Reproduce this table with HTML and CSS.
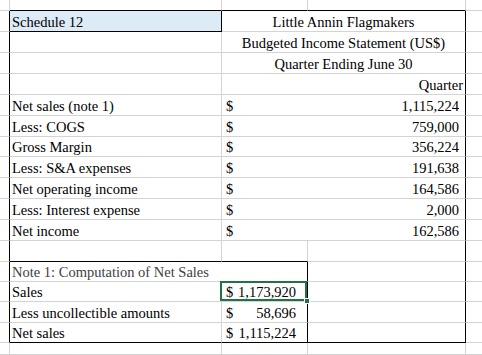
FILE: index.html
```html
<!DOCTYPE html>
<html lang="en">
<head>
    <meta charset="UTF-8">
    <title>Schedule 12</title>
    <link rel="stylesheet" href="styles.css">
</head>
<body>
<div class="sheet">
    <!-- row above the table -->
    <div class="c"></div><div class="c bb"></div><div class="c bb"></div><div class="c bb"></div><div class="c d"></div>

    <!-- heading -->
    <div class="c edge"></div>
    <div class="c sched br bb">Schedule 12</div>
    <div class="c wide center br">Little Annin Flagmakers</div>
    <div class="c d"></div>

    <div class="c edge"></div><div class="c"></div>
    <div class="c wide center br">Budgeted Income Statement (US$)</div>
    <div class="c d"></div>

    <div class="c edge"></div><div class="c"></div>
    <div class="c wide center br">Quarter Ending June 30</div>
    <div class="c d"></div>

    <div class="c edge"></div><div class="c"></div>
    <div class="c wide right br">Quarter</div>
    <div class="c d"></div>

    <!-- statement lines -->
    <div class="c edge"></div><div class="c">Net sales (note 1)</div>
    <div class="c wide money br"><span>$</span><span>1,115,224</span></div>
    <div class="c d"></div>

    <div class="c edge"></div><div class="c">Less: COGS</div>
    <div class="c wide money br"><span>$</span><span>759,000</span></div>
    <div class="c d"></div>

    <div class="c edge"></div><div class="c">Gross Margin</div>
    <div class="c wide money br"><span>$</span><span>356,224</span></div>
    <div class="c d"></div>

    <div class="c edge"></div><div class="c">Less: S&amp;A expenses</div>
    <div class="c wide money br"><span>$</span><span>191,638</span></div>
    <div class="c d"></div>

    <div class="c edge"></div><div class="c">Net operating income</div>
    <div class="c wide money br"><span>$</span><span>164,586</span></div>
    <div class="c d"></div>

    <div class="c edge"></div><div class="c">Less: Interest expense</div>
    <div class="c wide money br"><span>$</span><span>2,000</span></div>
    <div class="c d"></div>

    <div class="c edge"></div><div class="c">Net income</div>
    <div class="c wide money br"><span>$</span><span>162,586</span></div>
    <div class="c d"></div>

    <!-- blank row -->
    <div class="c edge"></div><div class="c bb"></div><div class="c bb"></div><div class="c br"></div><div class="c d"></div>

    <!-- note 1 -->
    <div class="c edge"></div>
    <div class="c pair note br">Note 1: Computation of Net Sales</div>
    <div class="c br"></div>
    <div class="c d"></div>

    <div class="c edge"></div><div class="c">Sales</div>
    <div class="c money small br selected"><span>$</span><span>1,173,920</span></div>
    <div class="c br"></div>
    <div class="c d"></div>

    <div class="c edge"></div><div class="c">Less uncollectible amounts</div>
    <div class="c money small br"><span>$</span><span>58,696</span></div>
    <div class="c br"></div>
    <div class="c d"></div>

    <div class="c edge"></div><div class="c bb">Net sales</div>
    <div class="c money small br bb"><span>$</span><span>1,115,224</span></div>
    <div class="c br bb"></div>
    <div class="c d"></div>

    <!-- row below the table -->
    <div class="c"></div><div class="c"></div><div class="c"></div><div class="c"></div><div class="c d"></div>
</div>
</body>
</html>
```

FILE: styles.css
```css
body {
    margin: 0;
    background: #fff;
    overflow: hidden;
    font-family: "Liberation Serif", "Times New Roman", serif;
    font-size: 14.5px;
    color: #000;
}

.sheet {
    display: grid;
    grid-template-columns: 10px 212px 86px 158px 16px;
    grid-template-rows: 11px 21px 21px 21px 21px 21px 21px 20px 21px 21px 21px 21px 21px 20px 20px 21px 20px 12px;
}

/* one spreadsheet cell, gridline on the right and bottom */
.c {
    box-sizing: border-box;
    display: flex;
    align-items: flex-end;
    padding-left: 2px;
    line-height: 17px;
    white-space: nowrap;
    border-right: 1px solid #d4d4d4;
    border-bottom: 1px solid #d4d4d4;
}

.d { border-right: none; }

.edge { border-right-color: #000; }
.br { border-right-color: #000; }
.bb { border-bottom-color: #000; }

.sched { background: #ddebf7; }

.wide { grid-column: span 2; }
.pair { grid-column: span 2; }

.center { justify-content: center; padding-left: 0; }
.right { justify-content: flex-end; padding-right: 2px; }

.money {
    justify-content: space-between;
    padding-left: 4px;
    padding-right: 6px;
}
.money.small { padding-right: 11px; }

.note { color: #404040; }

/* active cell */
.selected { position: relative; }
.selected::after {
    content: "";
    position: absolute;
    left: -2px;
    top: -1px;
    right: 0;
    bottom: 0;
    border: 2px solid #217346;
}
.selected::before {
    content: "";
    position: absolute;
    right: -3px;
    bottom: -3px;
    width: 4px;
    height: 4px;
    background: #217346;
    border: 1px solid #fff;
    z-index: 1;
}
```
